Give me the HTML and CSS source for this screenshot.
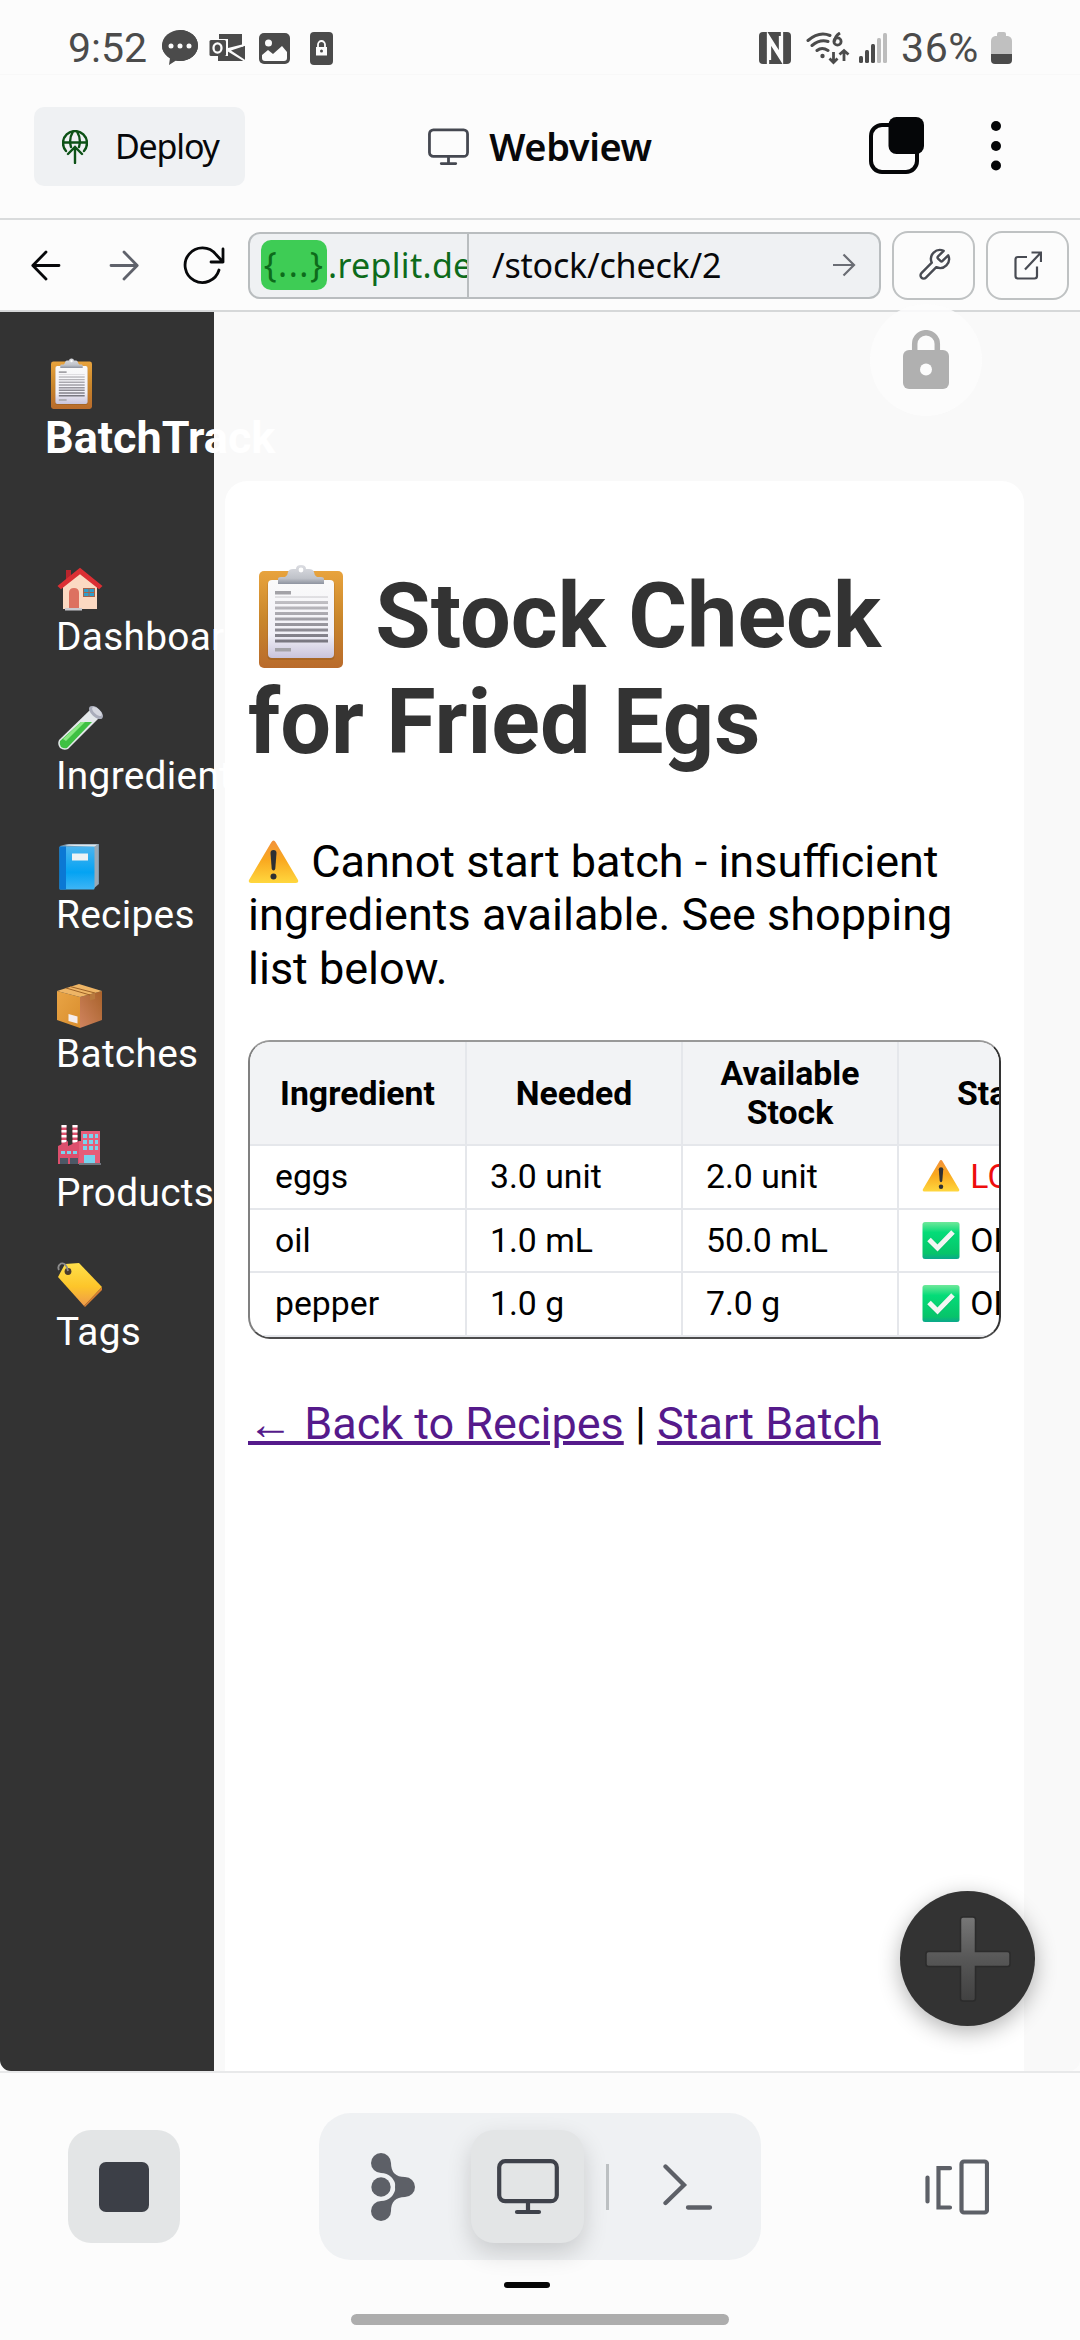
FILE: index.html
```html
<!DOCTYPE html>
<html lang="en">
<head>
<meta charset="utf-8">
<title>BatchTrack - Stock Check</title>
<link rel="stylesheet" href="styles.css">
</head>
<body>
<svg width="0" height="0" class="defs" aria-hidden="true">
  <defs>
    <linearGradient id="board" x1="0" y1="0" x2="0" y2="1"><stop offset="0" stop-color="#e8a33d"/><stop offset=".5" stop-color="#c9862b"/><stop offset="1" stop-color="#b96b2c"/></linearGradient>
    <linearGradient id="paper" x1="0" y1="0" x2="0" y2="1"><stop offset="0" stop-color="#fafafa"/><stop offset=".7" stop-color="#f1f0f7"/><stop offset="1" stop-color="#c9c4dc"/></linearGradient>
    <linearGradient id="metal" x1="0" y1="0" x2="0" y2="1"><stop offset="0" stop-color="#dcdde2"/><stop offset=".7" stop-color="#bfc2c9"/><stop offset="1" stop-color="#8e939f"/></linearGradient>
    <linearGradient id="lines" x1="0" y1="0" x2="0" y2="1"><stop offset="0" stop-color="#c9c8cc"/><stop offset="1" stop-color="#77757f"/></linearGradient>
    <linearGradient id="amber" x1="0" y1="0" x2="0" y2="1"><stop offset="0" stop-color="#f2913a"/><stop offset=".45" stop-color="#f9a81f"/><stop offset="1" stop-color="#ffd73e"/></linearGradient>
    <linearGradient id="green" x1="0" y1="0" x2="0" y2="1"><stop offset="0" stop-color="#6fe89a"/><stop offset=".28" stop-color="#04dc78"/><stop offset=".85" stop-color="#07c46a"/><stop offset="1" stop-color="#0ba88c"/></linearGradient>
    <linearGradient id="cover" x1="0" y1="0" x2="0" y2="1"><stop offset="0" stop-color="#4cb4ee"/><stop offset=".6" stop-color="#04a3f3"/><stop offset="1" stop-color="#3fb5f5"/></linearGradient>
    <linearGradient id="tag" x1="0" y1="0" x2="0" y2="1"><stop offset="0" stop-color="#ffe04a"/><stop offset=".55" stop-color="#fdc52a"/><stop offset="1" stop-color="#ee9a4a"/></linearGradient>
    <linearGradient id="plus" x1="0" y1="0" x2="0" y2="1"><stop offset="0" stop-color="#777"/><stop offset=".5" stop-color="#575757"/><stop offset="1" stop-color="#414141"/></linearGradient>
    <linearGradient id="carton" x1="0" y1="0" x2="1" y2="1"><stop offset="0" stop-color="#e9a445"/><stop offset="1" stop-color="#d98e2e"/></linearGradient>
    <linearGradient id="cartonSide" x1="1" y1="0" x2="0" y2="1"><stop offset="0" stop-color="#a8622a"/><stop offset="1" stop-color="#d0845f"/></linearGradient>
    <symbol id="clipboard" viewBox="0 0 84 104">
      <rect x="0" y="6" width="84" height="97" rx="5" fill="url(#board)"/>
      <rect x="8.5" y="16" width="67" height="79" rx="4" fill="#8f5a20" opacity=".45"/>
      <rect x="9" y="15" width="66" height="78" rx="4" fill="url(#paper)"/>
      <path d="M19 19v-5q0-2 3-2h4q3-2 3-5 1-3 5-3h3q0-4 5-4t5 4h3q4 0 5 3 0 3 3 5h4q3 0 3 2v5z" fill="url(#metal)"/>
      <circle cx="42" cy="5" r="2.4" fill="#fff"/>
      <path d="M16 26h16v3.400H16zM16 83h16v3.400H16z" fill="#a3a2a7"/>
      <path d="M16 31.500h53v1H16zM16 36h53v3H16zM16 41.500h53v3H16zM16 47h53v3H16zM16 52.500h53v3H16zM16 58h53v3H16zM16 63.500h53v3H16zM16 69h53v3H16zM16 74.500h53v3H16z" fill="url(#lines)"/>
    </symbol>
    <symbol id="warning" viewBox="0 0 51 46">
      <path d="M23.200 3.500q2.300-4 4.600 0L50 41q1 3-2 3H3q-3 0-2-3z" fill="url(#amber)"/>
      <path d="M22.500 14q0-3 3-3t3 3l-1.200 15.500q-.3 2-1.800 2t-1.800-2z" fill="#2f3033"/><circle cx="25.500" cy="37.500" r="3" fill="#2f3033"/>
    </symbol>
    <symbol id="check" viewBox="0 0 37 37">
      <rect width="37" height="37" rx="2.500" fill="url(#green)"/>
      <path d="M6.500 18.500l8.500 8L30.500 11" fill="none" stroke="#0a8f55" stroke-width="5" opacity=".35"/>
      <path d="M6.500 17.500l8.500 8.500L30.500 10" fill="none" stroke="#f2f6f3" stroke-width="5"/>
    </symbol>
    <symbol id="monitor" viewBox="0 0 62 56">
      <rect x="2.200" y="2.200" width="57.600" height="40" rx="6" fill="none" stroke="currentColor" stroke-width="4.200"/>
      <path d="M31 43v10M20 53h22" fill="none" stroke="currentColor" stroke-width="4.200" stroke-linecap="round"/>
    </symbol>
  </defs>
</svg>

<div class="phone">
  <div class="status">
    <span class="clock">9:52</span>
    <svg class="s-chat" width="36" height="36" viewBox="0 0 36 36"><path d="M18 0c10 0 18 7 18 15.500S28 31 18 31q-2 0-4-.5L7 35l1-7Q0 23 0 15.500 0 7 18 0z" fill="#4b4b4b"/><ellipse cx="18" cy="15.500" rx="18" ry="15.500" fill="#4b4b4b"/><g fill="#fcfcfc"><circle cx="9" cy="16" r="2.500"/><circle cx="18" cy="16" r="2.500"/><circle cx="27" cy="16" r="2.500"/></g></svg>
    <svg class="s-mail" width="37" height="30" viewBox="0 0 37 30"><path d="M10 1h23v13l3-2v16H9v-5h10V6h-9z" fill="#4b4b4b"/><path d="M19 15l18-4.500v2L22 17.500l15 10-1 1.500-18-11z" fill="#fcfcfc"/><rect x=".5" y="7" width="16.500" height="16" rx="1.500" fill="#4b4b4b"/><ellipse cx="8.500" cy="15" rx="4" ry="4.700" fill="none" stroke="#fcfcfc" stroke-width="2.300"/></svg>
    <svg class="s-photo" width="31" height="31" viewBox="0 0 31 31"><rect width="31" height="31" rx="5" fill="#4b4b4b"/><circle cx="9.500" cy="10" r="3.500" fill="#fcfcfc"/><path d="M3 22l6-5 5 4 9-8 5 6v6q0 3-3 3H6q-3 0-3-3z" fill="#fcfcfc"/></svg>
    <svg class="s-lock" width="23" height="33" viewBox="0 0 23 33"><rect width="23" height="33" rx="4" fill="#4b4b4b"/><rect x="6" y="15" width="11" height="8.500" fill="#fcfcfc"/><path d="M8 15v-2.500a3.500 3.500 0 0 1 7 0V15" fill="none" stroke="#fcfcfc" stroke-width="1.800"/><circle cx="11.500" cy="19" r="1.500" fill="#4b4b4b"/></svg>
    <span class="spacer"></span>
    <svg class="s-nfc" width="32" height="32" viewBox="0 0 32 32"><rect width="32" height="32" rx="4" fill="#4b4b4b"/><path d="M9 32V3l12 19V4M23 0v29L11 10v18" fill="none" stroke="#fcfcfc" stroke-width="2.300"/></svg>
    <svg class="s-wifi" width="44" height="33" viewBox="0 0 44 33"><g fill="none" stroke="#4b4b4b" stroke-width="3" stroke-linecap="round"><path d="M2 8.500Q13-1 24 3.500M6 13.500q8-6.500 16-4M11 18.500q5-4 11 0"/></g><circle cx="16.500" cy="24" r="2.200" fill="#4b4b4b"/><path d="M34 1q-5 3-5.500 8.500" fill="none" stroke="#4b4b4b" stroke-width="3"/><circle cx="31.500" cy="9.500" r="3.600" fill="none" stroke="#4b4b4b" stroke-width="2.800"/><path d="M27.500 20v10M23.500 26.500l4 4 4-4M38 29V18.500M33.500 22.500l4.500-4 4.500 4" fill="none" stroke="#4b4b4b" stroke-width="2.800"/></svg>
    <svg class="s-signal" width="28" height="30" viewBox="0 0 28 30"><g fill="#4b4b4b"><rect y="23" width="4" height="7" rx="1.500"/><rect x="6" y="17" width="4" height="13" rx="1.500"/><rect x="12" y="11" width="4" height="19" rx="1.500"/></g><g fill="#bdbdbd"><rect x="18" y="5" width="4" height="25" rx="1.500"/><rect x="24" width="4" height="30" rx="1.500"/></g></svg>
    <span class="percent">36%</span>
    <svg class="s-batt" width="21" height="32" viewBox="0 0 21 32"><path d="M6 4V2q0-2 2-2h5q2 0 2 2v2h2q4 1 4 5v13H0V9q0-4 4-5z" fill="#c0c0c0"/><path d="M0 22h21v6q0 4-4 4H4q-4 0-4-4z" fill="#4b4b4b"/></svg>
  </div>

  <header class="topbar">
    <div class="deploy">
      <svg width="26" height="34" viewBox="0 0 26 34" fill="none" stroke="#0d5216" stroke-width="2.400" stroke-linecap="round"><path d="M4 21A12 12 0 1 1 22 21M1 12.500h24M9 17Q6.500 9 11 1.500M17 17Q19.500 9 15 1.500M13 33V18M6 24l7-7 7 7"/></svg>
      <span>Deploy</span>
    </div>
    <div class="tab-title">
      <svg width="41" height="38" color="#454851"><use href="#monitor"/></svg>
      <span>Webview</span>
    </div>
    <div class="actions">
      <svg width="55" height="57" viewBox="0 0 55 57"><rect x="2" y="8" width="46" height="47" rx="11" fill="none" stroke="#050608" stroke-width="4"/><rect x="19.500" y="0" width="35.500" height="37" rx="8" fill="#050608"/></svg>
      <svg width="12" height="52" viewBox="0 0 12 52" fill="#050608"><circle cx="6" cy="6" r="5"/><circle cx="6" cy="26" r="5"/><circle cx="6" cy="45.500" r="5"/></svg>
    </div>
  </header>

  <div class="urlbar">
    <svg class="n-back" width="30" height="31" viewBox="0 0 30 31"><path d="M28 15.500H2M15 2L1.800 15.500 15 29" /></svg>
    <svg class="n-fwd" width="30" height="31" viewBox="0 0 30 31"><path d="M2 15.500h26M15 2l13.200 13.500L15 29"/></svg>
    <svg class="n-reload" width="42" height="40" viewBox="0 0 42 40"><path d="M36 25A17.300 17.300 0 1 1 33 9.500l7 7.500M40 4v13H28"/></svg>
    <div class="address">
      <div class="host"><span class="pill">{...}</span><span>.replit.dev</span></div>
      <div class="path"><span>/stock/check/2</span>
        <svg width="24" height="24" viewBox="0 0 24 24"><path d="M1 12h21M11.500 1.500L22 12 11.500 22.500" fill="none" stroke="#6a6d74" stroke-width="2.200"/></svg></div>
    </div>
    <div class="tool">
      <svg width="36" height="36" viewBox="0 0 24 24" fill="none" stroke="#484b53" stroke-width="1.600" stroke-linejoin="round"><path d="M14.700 6.300a1 1 0 0 0 0 1.400l1.600 1.600a1 1 0 0 0 1.400 0l3.770-3.770a6 6 0 0 1-7.940 7.940l-6.910 6.910a2.120 2.120 0 0 1-3-3l6.910-6.910a6 6 0 0 1 7.940-7.940l-3.760 3.760z"/></svg>
    </div>
    <div class="tool">
      <svg width="28" height="29" viewBox="0 0 28 29" fill="none" stroke="#484b53" stroke-width="2.200"><path d="M13 6H4Q1.500 6 1.500 8.500V25q0 2.500 2.500 2.500h16.500q2.500 0 2.500-2.500v-9.500M11 18.500L26.500 2M17.500 1.500H27V11"/></svg>
    </div>
  </div>

  <div class="webview">
    <aside class="sidebar">
      <div class="brand"><svg width="41" height="52"><use href="#clipboard"/></svg><span>BatchTrack</span></div>
      <nav>
        <a><svg width="46" height="46" viewBox="0 0 46 46"><path d="M9 4h5v9H9z" fill="#b8252c"/><path d="M6 20L23 5l17 15v23H6z" fill="#fbd9c2"/><path d="M2 20L23 3l21 17-2 2L23 7 4 22z" fill="#dc2f33" stroke="#dc2f33" stroke-width="2"/><path d="M12 42V27q0-5 5-5t5 5v15z" fill="#dd7160"/><path d="M8 42h17v2.500H8z" fill="#c9c9cf"/><path d="M26 22h12v9H26z" fill="#a6634a"/><path d="M27 23h4.500v3H27zM32.500 23H37v3h-4.500zM27 27h4.500v3H27zM32.500 27H37v3h-4.500z" fill="#2f9ecb"/></svg><span>Dashboard</span></a>
        <a><svg width="46" height="46" viewBox="0 0 46 46"><path d="M33 5L2 35q-2 4 1 8 4 3 8 1l31-31z" fill="#e4e8ea"/><path d="M24 17L3 36q-1 3 1 6 3 2 6 1l25-26z" fill="#3fc043"/><path d="M24 17L6 34l3 2 19-19z" fill="#8be884"/><ellipse cx="39" cy="7.500" rx="8.500" ry="4.500" transform="rotate(42 39 7.500)" fill="#a9acba"/><ellipse cx="40" cy="6.500" rx="6" ry="2.800" transform="rotate(42 40 6.500)" fill="#d5d7df"/></svg><span>Ingredients</span></a>
        <a><svg width="46" height="46" viewBox="0 0 46 46"><path d="M3 2l7-2h32v40l-6 5z" fill="#7d97ab"/><path d="M8 1.500L12 .5h29L37 3z" fill="#dfe6ea"/><path d="M37 3l4-2.500V40l-4 4z" fill="#9aa9b5"/><rect x="2.500" y="2.500" width="35" height="43" rx="1" fill="url(#cover)"/><path d="M2.500 2.500h6.500v43H2.500z" fill="#0b78d4"/><rect x="15" y="9.500" width="16" height="7" fill="#eef2f4"/></svg><span>Recipes</span></a>
        <a><svg width="46" height="46" viewBox="0 0 46 46"><path d="M0 8l23 6v31L0 37z" fill="url(#carton)"/><path d="M45 8l-22 6v31l22-8z" fill="url(#cartonSide)"/><path d="M0 8l22-7 23 7-22 6z" fill="#eeb566"/><path d="M9 5l24 7M13 3.500L38 10" stroke="#9c6126" stroke-width="1" fill="none"/><path d="M33 11.500l5-1.500v6l-5 1.500z" fill="#b87a3e"/><path d="M11.500 31l9 2.500v7l-9-2.500z" fill="#f5eeee"/></svg><span>Batches</span></a>
        <a><svg width="46" height="46" viewBox="0 0 46 46"><path d="M7 3v20M18 3v20" stroke="#e0516f" stroke-width="5"/><path d="M7 3v19M18 3v19" stroke="#fff" stroke-width="5" stroke-dasharray="2.500 2.500"/><path d="M1 24l10-5v5l11-5v23H1z" fill="#dd4f6d"/><path d="M24 9h19v33H22V19h2z" fill="#e65d79"/><path d="M26 12h4v4h-4zM32 12h4v4h-4zM38 12h3v4h-3zM26 18h4v4h-4zM32 18h4v4h-4zM38 18h3v4h-3zM26 24h4v4h-4zM32 24h4v4h-4zM38 24h3v4h-3zM27 33h11v9H27zM4 29h4v3H4zM10 29h4v3h-4zM16 29h4v3h-4z" fill="#79d3ee"/><path d="M3 36h8v6H3zM13 36h8v6h-8z" fill="#4c5866"/><path d="M22 41h22v2H22z" fill="#70757e"/></svg><span>Products</span></a>
        <a><svg width="46" height="46" viewBox="0 0 46 46"><path d="M1 16L8 3l14-1 23 24-18 19z" fill="url(#tag)"/><path d="M27 45L45 26v3L28 46z" fill="#d98032"/><circle cx="11" cy="10.500" r="3.400" fill="#4a3a2c"/><path d="M11 10Q9 1 4 2.500 0 5 2 9" fill="none" stroke="#8d8d8d" stroke-width="1.800"/></svg><span>Tags</span></a>
      </nav>
    </aside>
    <main class="content">
      <section class="card">
        <h1><svg class="h-clip" width="84" height="104"><use href="#clipboard"/></svg> Stock Check<br>for Fried Egs</h1>
        <p class="notice"><svg class="p-warn" width="51" height="46"><use href="#warning"/></svg> Cannot start batch - insufficient<br>ingredients available. See shopping<br>list below.</p>
        <div class="table-wrap">
          <table>
            <tr class="head"><th>Ingredient</th><th>Needed</th><th>Available Stock</th><th>Status</th></tr>
            <tr><td>eggs</td><td>3.0 unit</td><td>2.0 unit</td><td class="low"><svg width="38" height="34"><use href="#warning"/></svg> LOW</td></tr>
            <tr><td>oil</td><td>1.0 mL</td><td>50.0 mL</td><td><svg width="38" height="37"><use href="#check"/></svg> OK</td></tr>
            <tr><td>pepper</td><td>1.0 g</td><td>7.0 g</td><td><svg width="38" height="37"><use href="#check"/></svg> OK</td></tr>
          </table>
        </div>
        <div class="links"><a href="#">← Back to Recipes</a> | <a href="#">Start Batch</a></div>
      </section>
    </main>
    <div class="fab"><svg width="86" height="86" viewBox="0 0 86 86"><path d="M38 1h10q2.500 0 2.500 2.500v32h32q2.500 0 2.500 2.500v10q0 2.500-2.500 2.500h-32v32q0 2.500-2.500 2.500H38q-2.500 0-2.500-2.500v-32h-32Q1 50.500 1 48V38q0-2.500 2.500-2.500h32v-32Q35.500 1 38 1z" fill="url(#plus)" stroke="#2b2b2b" stroke-width="1.500"/></svg></div>
    <div class="secure"><svg width="46" height="60" viewBox="0 0 46 60"><rect y="20" width="46" height="39" rx="6" fill="#b0b0b0"/><path d="M11.700 21v-7a11.300 11.300 0 0 1 22.600 0v7" fill="none" stroke="#b0b0b0" stroke-width="5.500"/><circle cx="23" cy="39.500" r="6" fill="#fcfcfc"/></svg></div>
  </div>

  <footer class="dock">
    <div class="dock-row">
      <div class="stop"><span></span></div>
      <div class="switcher">
        <svg class="d-agent" width="44" height="68" viewBox="0 0 44 68" fill="#5d6067"><circle cx="10" cy="10" r="10"/><circle cx="10" cy="34" r="9.700"/><circle cx="10" cy="58" r="10"/><circle cx="34" cy="34" r="10"/><path d="M10 20A14.400 14 0 0 1 10 48V58H20Q20 44 34 44V24Q20 24 20 10H10z"/></svg>
        <div class="current"><svg width="62" height="56" color="#3f424b"><use href="#monitor"/></svg></div>
        <i class="rule"></i>
        <svg class="d-term" width="50" height="46" viewBox="0 0 50 46" fill="none" stroke="#5d6067" stroke-width="4.300" stroke-linecap="round"><path d="M2.500 2.500L21 21 2.500 39M25 43.500h22"/></svg>
      </div>
      <svg class="d-tabs" width="64" height="56" viewBox="0 0 64 56" fill="none" stroke="#5d6067" stroke-width="4.200" stroke-linecap="round"><path d="M2.500 18.500v24M25 9.200H13.500V48.500H25"/><rect x="36.500" y="2.500" width="25.500" height="51" rx="2.500"/></svg>
    </div>
    <div class="marker"></div>
    <div class="gesture"></div>
  </footer>
</div>
</body>
</html>
```

FILE: styles.css
```css
* { box-sizing: border-box; }
body { margin: 0; background: #fcfcfc; font-family: Roboto, "Liberation Sans", sans-serif; color: #000; }
svg { display: block; flex: none; }
.defs { position: absolute; }
.phone { width: 1080px; height: 2340px; display: flex; flex-direction: column; overflow: hidden; background: #fcfcfc; }

/* system status bar */
.status { height: 75px; padding: 22px 68px 0 68px; display: flex; align-items: center; color: #4b4b4b; font-size: 41px; line-height: 54px; border-bottom: 1px solid #f8f8f8; }
.clock { width: 94px; }
.s-mail { margin-left: 11px; }
.s-photo { margin-left: 13px; }
.s-lock { margin-left: 20px; }
.spacer { flex: 1; }
.s-wifi { margin-left: 15px; }
.s-signal { margin-left: 9px; }
.percent { margin-left: 14px; width: 90px; letter-spacing: .6px; }

/* header */
.topbar { height: 145px; display: grid; grid-template-columns: 1fr auto 1fr; align-items: center; padding: 0 78px 0 34px; border-bottom: 2px solid #d9dbdc; font-family: "Noto Sans", sans-serif; color: #07080a; }
.deploy { width: 211px; height: 79px; border-radius: 10px; background: #eff1f3; display: flex; align-items: center; gap: 27px; padding-left: 28px; font-size: 34px; letter-spacing: -1.2px; }
.deploy, .tab-title { line-height: 44px; }
.deploy span, .tab-title span { margin-top: -2px; }
.tab-title { display: flex; align-items: center; gap: 20px; font-size: 38px; font-weight: 600; letter-spacing: -.4px; margin-left: 44px; }
.actions { display: flex; justify-content: flex-end; align-items: center; gap: 66px; margin-top: -2px; }

/* navigation row */
.urlbar { height: 92px; display: flex; align-items: center; padding: 0 11px 0 31px; border-bottom: 2px solid #d6d8d9; font-family: "Noto Sans", sans-serif; }
.urlbar > svg { fill: none; stroke: #07080a; stroke-width: 2.8px; stroke-linecap: round; stroke-linejoin: round; }
.n-fwd { margin-left: 48px; }
.urlbar > .n-fwd { stroke: #5f626b; }
.n-reload { margin-left: 44px; }
.address { margin-left: 23px; width: 633px; height: 67px; border: 2px solid #b9bdbf; border-radius: 12px; background: #eff1f3; display: flex; overflow: hidden; font-size: 34px; line-height: 48px; }
.host { width: 219px; border-right: 2px solid #b9bdbf; display: flex; align-items: center; padding-left: 11px; overflow: hidden; color: #0d6b1b; white-space: nowrap; letter-spacing: .3px; }
.pill { width: 66px; height: 50px; border-radius: 10px; background: #3ecc55; text-align: center; flex: none; margin-right: 1px; letter-spacing: 1.5px; }
.path { flex: 1; display: flex; align-items: center; justify-content: space-between; padding: 0 23px 0 23px; letter-spacing: -.2px; color: #07080a; }
.tool { width: 83px; height: 69px; border: 2px solid #bfc2c3; border-radius: 16px; margin-left: 11px; display: flex; align-items: center; justify-content: center; }

/* app preview */
.webview { height: 1759px; flex: none; display: flex; position: relative; background: #f9f9f9; border-radius: 0 0 11px 11px; }
.sidebar { width: 214px; flex: none; background: #333; color: #fff; padding: 46px 0 0 45px; border-bottom-left-radius: 11px; }
.brand { font-size: 45px; font-weight: 700; line-height: 53px; }
.brand svg { margin: 0 0 1px 6px; }
.brand span { display: block; width: max-content; }
nav { padding: 104px 0 0 11px; display: flex; flex-direction: column; gap: 49px; }
nav a { height: 90px; font-size: 38.8px; line-height: 45px; letter-spacing: .3px; }
nav svg { margin: -2px 0 2px 1px; }
.content { padding: 169px 56px 0 11px; flex: 1; min-width: 0; display: flex; }
.card { flex: 1; min-width: 0; background: #fff; border-radius: 22px 22px 0 0; padding: 83px 23px 0; }
h1 { margin: 0; font-size: 90px; line-height: 106px; font-weight: 700; color: #333; white-space: nowrap; }
h1 .h-clip { display: inline-block; margin: -2px 10px 0 11px; vertical-align: -22px; }
.notice { margin: 59px 0 0; font-size: 45px; line-height: 53.4px; white-space: nowrap; }
.notice svg { display: inline-block; vertical-align: -8px; margin: -4px 1px 0 0; }
.table-wrap { margin-top: 45px; height: 299px; border: 2px solid; border-color: #999 #333 #4c4c4c #808080; border-radius: 22px; overflow: hidden; }
table { width: 865px; table-layout: fixed; border-collapse: separate; border-spacing: 0; font-size: 33.75px; line-height: 39.4px; }
tr { height: 63.5px; }
.head { height: 104px; background: #f2f3f5; }
th, td { border: 0 solid #e5e7eb; border-width: 0 2px 2px 0; padding: 0 23px; }
th { font-weight: 700; }
th:first-child { width: 217px; }
td:first-child { padding-left: 25px; }
td { white-space: nowrap; }
td svg { display: inline-block; vertical-align: -3px; margin: -4px 2px -4px 0; }
.low svg { vertical-align: -1px; }
.low { color: #ee0d0d; }
.links { margin-top: 58px; font-size: 45px; line-height: 53px; white-space: nowrap; }
.links a { color: #551a8b; text-decoration: underline; text-decoration-thickness: 4px; }
.fab { position: absolute; left: 900px; top: 1579px; width: 135px; height: 135px; border-radius: 50%; background: #333; display: flex; align-items: center; justify-content: center; box-shadow: 0 6px 22px rgba(0, 0, 0, .3); }
.secure { position: absolute; left: 870px; top: -8px; width: 112px; height: 112px; border-radius: 50%; background: rgba(253, 253, 253, .85); display: flex; justify-content: center; padding-top: 26px; }

/* bottom dock */
.dock { flex: 1; border-top: 2px solid #e8e9ea; padding-top: 40px; }
.dock-row { display: flex; align-items: center; height: 147px; padding: 0 91px 0 68px; }
.stop { width: 112px; height: 113px; border-radius: 23px; background: #e3e5e6; display: flex; align-items: center; justify-content: center; }
.stop span { width: 50px; height: 50px; border-radius: 7px; background: #3c3f47; }
.switcher { width: 442px; height: 147px; margin-left: 139px; border-radius: 32px; background: #eff1f3; display: flex; align-items: center; padding-left: 52px; }
.current { width: 113px; height: 113px; margin-left: 56px; border-radius: 23px; background: #e3e5e6; display: flex; align-items: center; justify-content: center; box-shadow: 0 10px 24px rgba(0, 0, 0, .16); }
.rule { width: 3px; height: 46px; margin-left: 22px; background: #bcc0c2; }
.d-term { margin-left: 54px; }
.d-tabs { margin-left: auto; }
.marker { width: 46px; height: 6px; border-radius: 3px; background: #050505; margin: 22px 0 0 504px; }
.gesture { width: 378px; height: 11px; border-radius: 6px; background: #adadad; margin: 26px auto 0; }
```
